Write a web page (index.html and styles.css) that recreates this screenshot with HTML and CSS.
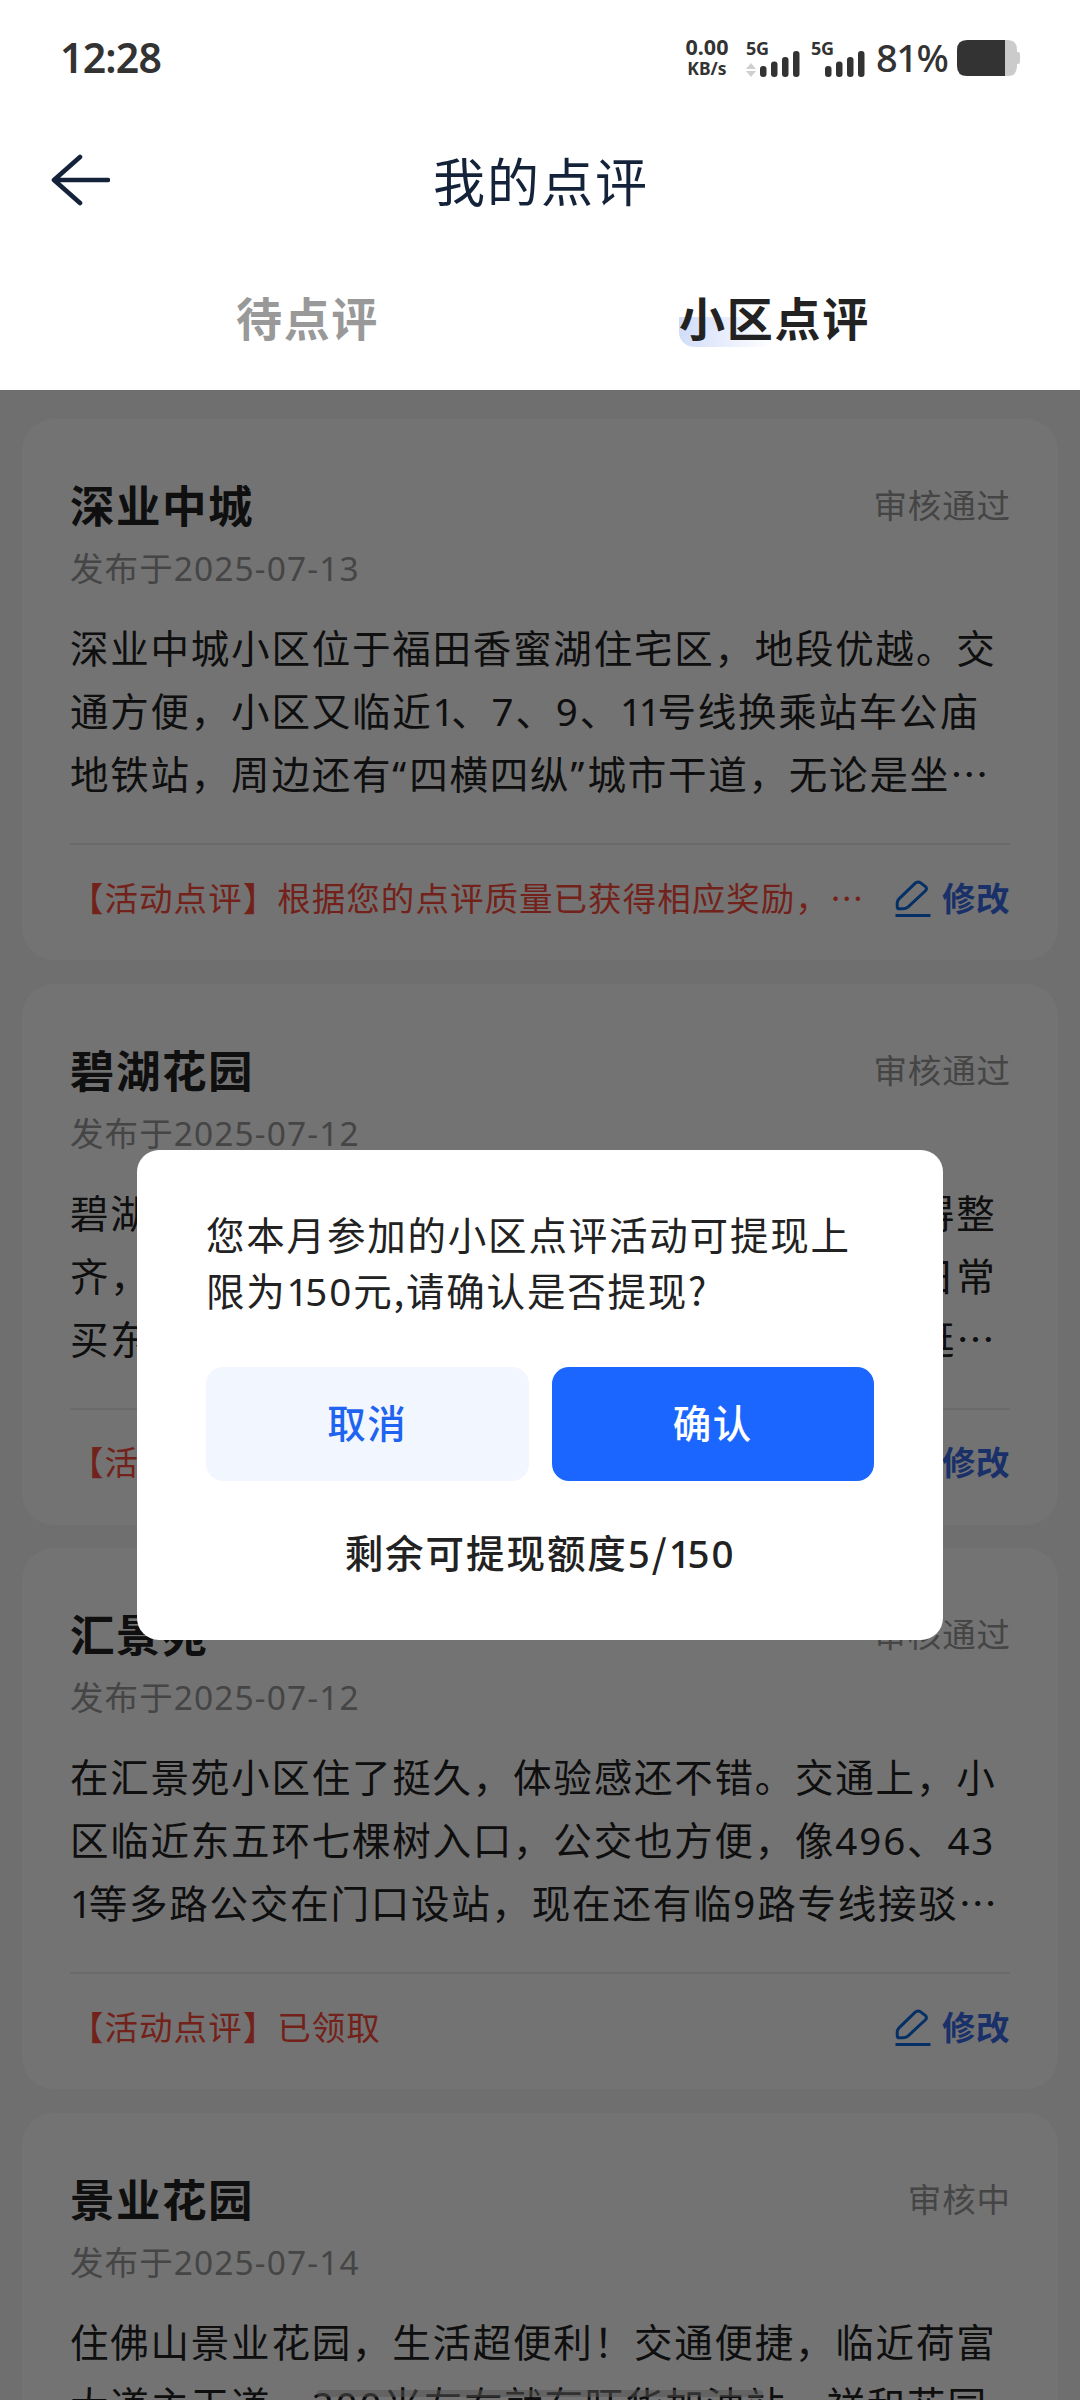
FILE: index.html
```html
<!DOCTYPE html>
<html lang="zh-CN">
<head>
<meta charset="utf-8">
<title>我的点评</title>
<link rel="stylesheet" href="styles.css">
</head>
<body>
<svg width="0" height="0" class="defs">
  <symbol id="edit" viewBox="0 0 36 38">
    <path d="M20 3.400 Q22.800 .800 25.600 2.900 L30.200 6.400 Q32.800 8.600 30.200 11 L13.200 26.800 Q10.800 28.800 7.800 28.800 L4.600 28.800 Q2.200 28.800 2.200 26.400 V23 Q2.200 20.600 4 18.900 Z" fill="none" stroke="currentColor" stroke-width="3" stroke-linejoin="round"/>
    <path d="M.500 35.500H35.500" stroke="currentColor" stroke-width="3"/>
  </symbol>
  <symbol id="bars" viewBox="0 0 40 26">
    <rect x="0" y="15" width="6.500" height="11" rx="3"/>
    <rect x="11" y="10.500" width="6.500" height="15.500" rx="3"/>
    <rect x="22" y="6" width="6.500" height="20" rx="3"/>
    <rect x="33" y="0" width="6.500" height="26" rx="3"/>
  </symbol>
</svg>
<div class="screen">
  <header class="header">
    <div class="statusbar">
      <span class="clock">12:28</span>
      <div class="indicators">
        <div class="speed"><span class="rate">0.00</span><span class="unit">KB/s</span></div>
        <div class="signal">
          <span class="net">5G</span>
          <div class="signal-row">
            <svg class="updown" width="10" height="14" viewBox="0 0 10 14"><path d="M5 0L10 6H0ZM5 14L0 8H10Z" fill="#cfcfcf"/></svg>
            <svg class="bars" width="40" height="26"><use href="#bars"/></svg>
          </div>
        </div>
        <div class="signal">
          <span class="net">5G</span>
          <div class="signal-row"><svg class="bars" width="40" height="26"><use href="#bars"/></svg></div>
        </div>
        <span class="percent">81%</span>
        <svg class="battery" width="63" height="36" viewBox="0 0 63 36">
          <path d="M47 0H51Q60 0 60 10V12H61Q63 12 63 14V22Q63 24 61 24H60V26Q60 36 51 36H47Z" fill="#cbcbcb"/>
          <path d="M48 0H10Q0 0 0 10V26Q0 36 10 36H48Z" fill="#333"/>
        </svg>
      </div>
    </div>
    <div class="navbar">
      <svg class="back" width="60" height="52" viewBox="0 0 60 52"><path d="M30 3L4 26L30 49M4.500 26H58" fill="none" stroke="#14233a" stroke-width="4.600" stroke-linecap="round" stroke-linejoin="round"/></svg>
      <h1 class="title">我的点评</h1>
      <span></span>
    </div>
    <nav class="tabs">
      <span class="tab">待点评</span>
      <span class="tab tab-active">小区点评</span>
    </nav>
  </header>

  <main class="list">
    <article class="card">
      <div class="card-head"><h2 class="name">深业中城</h2><span class="state">审核通过</span></div>
      <div class="date">发布于<i>2025-07-13</i></div>
      <div class="text">
        <p>深业中城小区位于福田香蜜湖住宅区，地段优越。交</p>
        <p>通方便，小区又临近<i class="one">1</i>、<i class="num">7</i>、<i class="num">9</i>、<i class="one">11</i>号线换乘站车公庙</p>
        <p>地铁站，周边还有<i class="quote">“</i>四横四纵<i class="quote">”</i>城市干道，无论是坐…</p>
      </div>
      <div class="card-foot"><span class="reward">【活动点评】根据您的点评质量已获得相应奖励，…</span><span class="edit"><svg width="36" height="38"><use href="#edit"/></svg>修改</span></div>
    </article>
    <article class="card">
      <div class="card-head"><h2 class="name">碧湖花园</h2><span class="state">审核通过</span></div>
      <div class="date">发布于<i>2025-07-12</i></div>
      <div class="text">
        <p>碧湖花园小区环境很不错，绿化做得很好，打理得整</p>
        <p>齐，走在里面让人心情舒畅。周边的配套也全，日常</p>
        <p>买东西很方便，附近有超市和菜市场，吃完饭能逛…</p>
      </div>
      <div class="card-foot"><span class="reward">【活动点评】已领取</span><span class="edit"><svg width="36" height="38"><use href="#edit"/></svg>修改</span></div>
    </article>
    <article class="card">
      <div class="card-head"><h2 class="name">汇景苑</h2><span class="state">审核通过</span></div>
      <div class="date">发布于<i>2025-07-12</i></div>
      <div class="text">
        <p>在汇景苑小区住了挺久，体验感还不错。交通上，小</p>
        <p>区临近东五环七棵树入口，公交也方便，像<i class="num">496</i>、<i class="num">43</i></p>
        <p><i class="one">1</i>等多路公交在门口设站，现在还有临<i class="num">9</i>路专线接驳…</p>
      </div>
      <div class="card-foot"><span class="reward">【活动点评】已领取</span><span class="edit"><svg width="36" height="38"><use href="#edit"/></svg>修改</span></div>
    </article>
    <article class="card">
      <div class="card-head"><h2 class="name">景业花园</h2><span class="state">审核中</span></div>
      <div class="date">发布于<i>2025-07-14</i></div>
      <div class="text">
        <p>住佛山景业花园，生活超便利！交通便捷，临近荷富</p>
        <p>大道主干道，<i class="num">200</i>米左右就有旺华加油站，祥和花园</p>
      </div>
    </article>
    <div class="mask"></div>
  </main>

  <section class="dialog">
    <p class="message">您本月参加的小区点评活动可提现上<br>限为<i class="one">1</i><i class="num">50</i>元,请确认是否提现?</p>
    <div class="actions">
      <button class="btn btn-cancel">取消</button>
      <button class="btn btn-ok">确认</button>
    </div>
    <p class="quota">剩余可提现额度<i class="num">5</i>/<i class="one">1</i><i class="num">50</i></p>
  </section>
  <div class="home-pill"></div>
</div>
</body>
</html>
```

FILE: styles.css
```css
* { box-sizing: border-box; margin: 0; padding: 0; }
body { width: 1080px; height: 2400px; overflow: hidden; font-family: "Noto Sans CJK SC", sans-serif; color: #222; background: #fff; }
i { font-style: normal; font-family: "Noto Sans", sans-serif; line-height: 1; }
.defs { position: absolute; }
.screen { position: relative; display: flex; flex-direction: column; width: 1080px; height: 2400px; overflow: hidden; }

.header { height: 390px; flex: none; background: #fff; }
.statusbar { display: flex; justify-content: space-between; align-items: center; height: 116px; padding: 0 60px 0 60px; color: #333; }
.clock { padding-bottom: 2px; font-size: 41px; font-weight: 600; font-family: "Noto Sans", sans-serif; letter-spacing: -.800px; line-height: 60px; }
.indicators { display: flex; align-items: center; }
.speed { display: flex; flex-direction: column; align-items: center; width: 48px; margin-right: 15px; padding-bottom: 2px; font-family: "Noto Sans", sans-serif; font-weight: 700; }
.rate { font-size: 21.500px; line-height: 22px; }
.unit { font-size: 17.500px; line-height: 20px; }
.signal { width: 54px; height: 36px; margin-right: 11px; }
.net { display: block; height: 11px; font: 700 18px/16px "Noto Sans", sans-serif; letter-spacing: -.300px; }
.signal-row { display: flex; justify-content: flex-end; align-items: flex-end; gap: 4px; }
.bars { fill: #333; }
.percent { width: 81px; padding-bottom: 2px; font: 500 38px/44px "Noto Sans", sans-serif; letter-spacing: -1.500px; }

.navbar { display: grid; grid-template-columns: 60px 1fr 60px; align-items: center; height: 128px; padding: 0 50px; }
.title { padding-left: 2px; text-align: center; font-size: 52px; line-height: 70px; font-weight: 400; letter-spacing: 2px; color: #14233a; }
.tabs { display: grid; grid-template-columns: 1fr 1fr; justify-items: center; align-items: center; height: 144px; padding: 0 72px 0 74px; }
.tab { font-size: 46px; line-height: 60px; font-weight: 600; letter-spacing: 1.700px; color: #999; }
.tab-active { color: #222; background: linear-gradient(100deg, #cfdbf9, #fff 95%) 0 31px / 96px 30px no-repeat; border-radius: 0 0 0 15px; padding-bottom: 1px; }

.list { position: relative; flex: 1; min-height: 0; overflow: hidden; padding: 29px 22px 0; background: #f5f5f5; }
.card { height: 541px; margin-bottom: 23.500px; padding: 50px 48px 0; border-radius: 32px; background: #fff; }
.card-head { display: flex; justify-content: space-between; align-items: center; height: 70px; }
.name { font-size: 44.500px; line-height: 66px; font-weight: 700; letter-spacing: 1.500px; }
.state { margin-right: -1px; font-size: 33.500px; line-height: 50px; letter-spacing: .900px; color: #999; }
.date { height: 53px; padding-top: 3px; font-size: 33.500px; line-height: 50px; letter-spacing: 1.100px; color: #999; }
.text { height: 251px; padding-top: 23px; font-size: 38.500px; line-height: 63px; letter-spacing: 1.780px; white-space: nowrap; }
.num { letter-spacing: 1.900px; }
.one { letter-spacing: -3.300px; }
.quote { letter-spacing: 3.200px; }
.card-foot { display: flex; justify-content: space-between; align-items: center; height: 105px; border-top: 2px solid #ececec; }
.reward { font-size: 33.500px; line-height: 50px; letter-spacing: 1.040px; color: #ff4d3c; white-space: nowrap; }
.edit { display: flex; align-items: center; gap: 11px; font-size: 33.500px; line-height: 50px; font-weight: 700; letter-spacing: .500px; color: #3a6ce8; }
.edit svg { color: #0a6ae0; transform: translateY(2px); }
.mask { position: absolute; inset: 0; background: rgba(0, 0, 0, .55); }

.dialog { position: absolute; left: 137px; top: 1150px; width: 806px; height: 490px; padding: 55px 69px 0; border-radius: 22px; background: #fff; color: #222; }
.message { height: 162px; font-size: 38.500px; line-height: 56px; letter-spacing: 1.800px; white-space: nowrap; }
.actions { display: grid; grid-template-columns: 1fr 1fr; gap: 23px; height: 114px; }
.btn { padding-bottom: 7px; border: 0; border-radius: 17px; font: 500 38.500px/56px "Noto Sans CJK SC", sans-serif; letter-spacing: 1.500px; }
.btn-cancel { background: #f2f6ff; color: #1f64f0; }
.btn-ok { background: #1b66ff; color: #fff; }
.quota { padding-top: 42px; text-align: center; font-size: 38.500px; line-height: 56px; font-weight: 500; letter-spacing: 1.950px; }
.home-pill { position: absolute; left: 317px; top: 2390px; width: 446px; height: 7px; border-radius: 4px; background: rgba(84, 84, 84, .5); }
```
